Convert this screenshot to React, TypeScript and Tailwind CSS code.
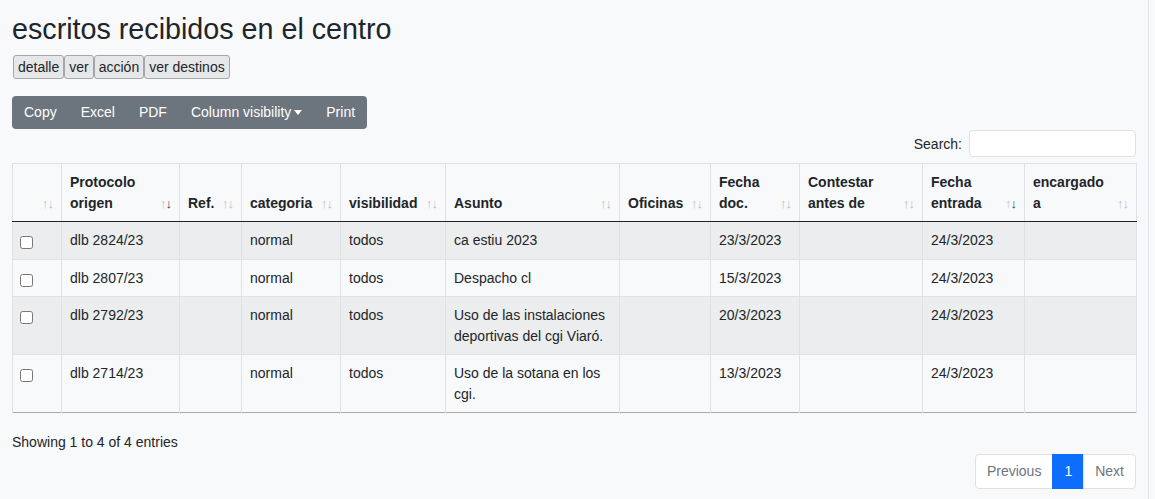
import React from "react";

const cols = [
  { label: "", w: 49 },
  { label: "Protocolo origen", w: 118, sorted: true },
  { label: "Ref.", w: 62 },
  { label: "categoria", w: 99 },
  { label: "visibilidad", w: 105 },
  { label: "Asunto", w: 174 },
  { label: "Oficinas", w: 91 },
  { label: "Fecha doc.", w: 89 },
  { label: "Contestar antes de", w: 123 },
  { label: "Fecha entrada", w: 102, sorted: true },
  { label: "encargado a", w: 112 },
];

const rows = [
  ["dlb 2824/23", "", "normal", "todos", "ca estiu 2023", "", "23/3/2023", "", "24/3/2023", ""],
  ["dlb 2807/23", "", "normal", "todos", "Despacho cl", "", "15/3/2023", "", "24/3/2023", ""],
  ["dlb 2792/23", "", "normal", "todos", "Uso de las instalaciones deportivas del cgi Viaró.", "", "20/3/2023", "", "24/3/2023", ""],
  ["dlb 2714/23", "", "normal", "todos", "Uso de la sotana en los cgi.", "", "13/3/2023", "", "24/3/2023", ""],
];

function SortArrows({ sorted }: { sorted?: boolean }) {
  return (
    <span className="shrink-0 text-[13px] leading-[21px] tracking-[-1px] text-[#212529] whitespace-nowrap">
      <span className="opacity-30">↑</span>
      <span className={sorted ? "opacity-90" : "opacity-30"}>↓</span>
    </span>
  );
}

export default function App() {
  return (
    <div className="min-h-screen bg-[#f8f9fa] font-['Liberation_Sans',Arial,sans-serif] text-[#212529]">
      <div className="w-[1149px] min-h-[499px] border-r border-[#e3e6ea] px-3 pt-3">
        <h1 className="text-[28.7px] leading-[1.2] font-normal mb-[9px]">escritos recibidos en el centro</h1>

        <div className="flex pl-px">
          {["detalle", "ver", "acción", "ver destinos"].map((b) => (
            <button
              key={b}
              className="h-6 px-[4px] text-sm leading-none bg-[#e6e7e9] border border-[#a4a6a9] rounded-[3px] text-[#212529]"
            >
              {b}
            </button>
          ))}
        </div>

        <div className="mt-[17px] inline-flex bg-[#6c757d] rounded text-white">
          {["Copy", "Excel", "PDF", "Column visibility", "Print"].map((b) => (
            <button key={b} className="px-3 py-1.5 text-sm leading-[21px] flex items-center">
              {b}
              {b === "Column visibility" && (
                <span className="ml-[3px] inline-block w-0 h-0 border-x-[4px] border-x-transparent border-t-[5px] border-t-white" />
              )}
            </button>
          ))}
        </div>

        <div className="flex justify-end items-center gap-[7px] mt-px">
          <span className="text-sm">Search:</span>
          <input className="w-[167px] h-[27px] bg-white border border-[#dee2e6] rounded px-2 text-sm outline-none" />
        </div>

        <table className="mt-[6px] table-fixed border-collapse w-[1124px] text-sm leading-[21px]">
          <colgroup>
            {cols.map((c, i) => (
              <col key={i} style={{ width: c.w }} />
            ))}
          </colgroup>
          <thead>
            <tr className="border-t border-[#dee2e6]">
              {cols.map((c, i) => (
                <th
                  key={i}
                  className="border-x border-[#dee2e6] border-b border-b-[#222] px-2 pt-[8px] pb-[7px] align-bottom text-left font-bold"
                >
                  <div className="flex justify-between items-end gap-1">
                    <span>{c.label}</span>
                    <SortArrows sorted={c.sorted} />
                  </div>
                </th>
              ))}
            </tr>
          </thead>
          <tbody>
            {rows.map((r, ri) => {
              const pad = ri === 0 ? "pt-2 pb-2" : "pt-2 pb-[7px]";
              return (
                <tr
                  key={ri}
                  className={`${ri % 2 === 0 ? "bg-[#ecedee]" : ""} ${ri === rows.length - 1 ? "border-b border-[#a9aaab]" : "border-b border-[#dee2e6]"}`}
                >
                  <td className={`border-x border-[#dee2e6] px-2 align-top ${pad}`}>
                    <input type="checkbox" className="w-[13px] h-[13px] mt-[6px] -ml-px block" />
                  </td>
                  {r.map((v, ci) => (
                    <td key={ci} className={`border-x border-[#dee2e6] px-2 align-top ${pad}`}>
                      {v}
                    </td>
                  ))}
                </tr>
              );
            })}
          </tbody>
        </table>

        <div className="mt-[19px] text-sm leading-[21px]">Showing 1 to 4 of 4 entries</div>

        <div className="flex justify-end mt-px">
          <div className="flex text-sm leading-[21px]">
            <span className="px-[11px] py-1.5 text-[#6c757d] bg-white border border-[#dee2e6] rounded-l">Previous</span>
            <span className="px-[11px] py-1.5 bg-[#0d6efd] text-white border border-[#0d6efd] -ml-px">1</span>
            <span className="px-[11px] py-1.5 text-[#6c757d] bg-white border border-[#dee2e6] rounded-r -ml-px">Next</span>
          </div>
        </div>
      </div>
    </div>
  );
}
